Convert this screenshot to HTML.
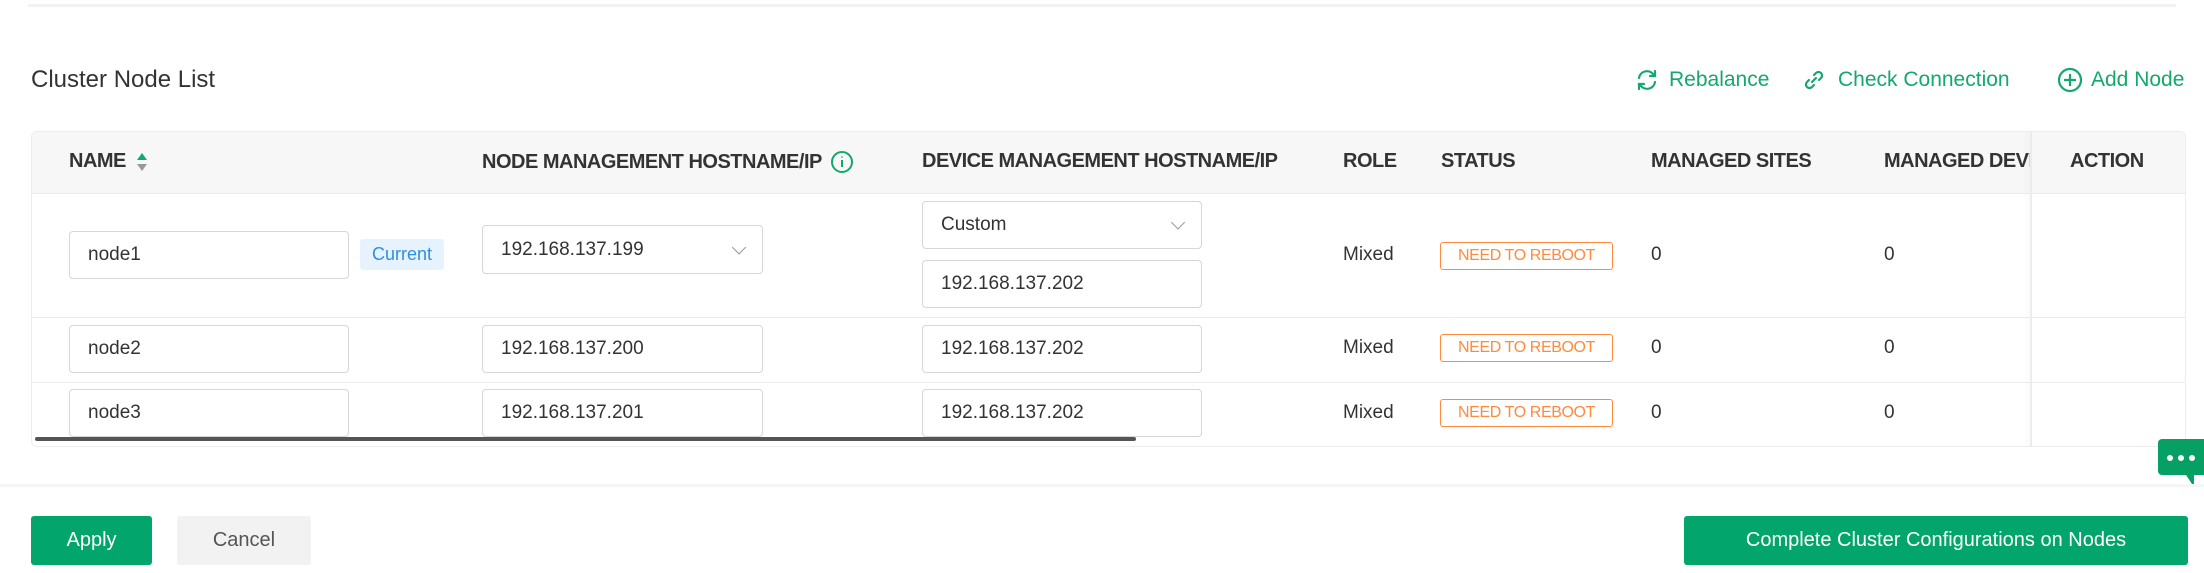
<!DOCTYPE html>
<html><head><meta charset="utf-8"><style>
*{box-sizing:border-box;margin:0;padding:0}
body{width:2204px;height:573px;background:#fff;font-family:"Liberation Sans",sans-serif;color:#333;position:relative;overflow:hidden}
.a{position:absolute;white-space:nowrap}
.hd{font-size:20px;font-weight:600;color:#333;top:150px;letter-spacing:-0.5px;display:flex;align-items:center}
.inp{position:absolute;border:1.5px solid #d6d6d6;border-radius:4px;background:#fff;font-size:19px;padding-left:18px;display:flex;align-items:center;color:#333}
.chev{position:absolute;right:18px;top:50%;width:10px;height:10px;border-right:1.5px solid #999;border-bottom:1.5px solid #999;transform:translateY(-75%) rotate(45deg)}
.badge{position:absolute;left:1440px;width:173px;height:28px;border:1.5px solid #ff8a3d;border-radius:3px;color:#ff8a3d;font-size:16px;display:flex;align-items:center;justify-content:center;letter-spacing:-0.4px}
.t{font-size:19px;color:#333}
.g{color:#13a86c;font-size:21px;top:68px}
.btn{position:absolute;top:516px;height:49px;border-radius:3px;font-size:20px;display:flex;align-items:center;justify-content:center}
</style></head><body>
<div class="a" style="left:28px;top:4px;width:2148px;height:3px;background:#f2f2f2"></div>
<div class="a" style="left:31px;top:66px;font-size:24px;color:#333">Cluster Node List</div>

<svg class="a" style="left:1635px;top:68px" width="24" height="24" viewBox="0 0 24 24" fill="none" stroke="#13a86c" stroke-width="2.2" stroke-linecap="round"><path d="M4 10a8 8 0 0 1 14-4l2 2M20 14a8 8 0 0 1-14 4l-2-2"/><path d="M20 3v5h-5M4 21v-5h5"/></svg>
<div class="a g" style="left:1669px">Rebalance</div>
<svg class="a" style="left:1802px;top:68px" width="24" height="24" viewBox="0 0 24 24" fill="none" stroke="#13a86c" stroke-width="2.2" stroke-linecap="round"><path d="M10 14l4-4"/><path d="M12 7l2-2a3.5 3.5 0 0 1 5 5l-2 2M12 17l-2 2a3.5 3.5 0 0 1-5-5l2-2"/></svg>
<div class="a g" style="left:1838px">Check Connection</div>
<svg class="a" style="left:2057px;top:67px" width="26" height="26" viewBox="0 0 26 26" fill="none" stroke="#13a86c" stroke-width="2.2"><circle cx="13" cy="13" r="11"/><path d="M13 7v12M7 13h12"/></svg>
<div class="a g" style="left:2091px">Add Node</div>

<div class="a" style="left:31px;top:131px;width:2155px;height:316px;border:1px solid #ececec;border-radius:6px;overflow:hidden">
 <div class="a" style="left:0;top:0;width:2155px;height:62px;background:#f7f7f7;border-bottom:1px solid #ececec"></div>
 <div class="a" style="left:0;top:185px;width:2155px;height:1px;background:#ececec"></div>
 <div class="a" style="left:0;top:250px;width:2155px;height:1px;background:#ececec"></div>
 <div class="a" style="left:1998px;top:0;width:2px;height:316px;background:#ececec;box-shadow:-3px 0 4px rgba(0,0,0,0.04)"></div>
</div>

<div class="a hd" style="left:69px">NAME<svg style="margin-left:10px" width="12" height="20" viewBox="0 0 12 20"><path d="M6 1l5 7H1z" fill="#13a86c"/><path d="M6 19l5-7H1z" fill="#999"/></svg></div>
<div class="a hd" style="left:482px">NODE MANAGEMENT HOSTNAME/IP<svg style="margin-left:8px" width="24" height="24" viewBox="0 0 24 24" fill="none" stroke="#13a86c" stroke-width="2"><circle cx="12" cy="12" r="10"/><path d="M12 10v7M12 6.5v1"/></svg></div>
<div class="a hd" style="left:922px">DEVICE MANAGEMENT HOSTNAME/IP</div>
<div class="a hd" style="left:1343px">ROLE</div>
<div class="a hd" style="left:1441px">STATUS</div>
<div class="a hd" style="left:1651px">MANAGED SITES</div>
<div class="a hd" style="left:1884px;width:146px;overflow:hidden">MANAGED DEVICES</div>
<div class="a hd" style="left:2070px">ACTION</div>

<!-- row1 -->
<div class="inp" style="left:69px;top:231px;width:280px;height:48px">node1</div>
<div class="a" style="left:360px;top:239px;width:84px;height:31px;background:#e6f2fd;border-radius:3px;color:#2d8ee5;font-size:18px;display:flex;align-items:center;justify-content:center">Current</div>
<div class="inp" style="left:482px;top:225px;width:281px;height:49px">192.168.137.199<span class="chev"></span></div>
<div class="inp" style="left:922px;top:201px;width:280px;height:48px">Custom<span class="chev"></span></div>
<div class="inp" style="left:922px;top:260px;width:280px;height:48px">192.168.137.202</div>
<div class="a t" style="left:1343px;top:244px">Mixed</div>
<div class="badge" style="top:242px">NEED TO REBOOT</div>
<div class="a t" style="left:1651px;top:244px">0</div>
<div class="a t" style="left:1884px;top:244px">0</div>

<!-- row2 -->
<div class="inp" style="left:69px;top:325px;width:280px;height:48px">node2</div>
<div class="inp" style="left:482px;top:325px;width:281px;height:48px">192.168.137.200</div>
<div class="inp" style="left:922px;top:325px;width:280px;height:48px">192.168.137.202</div>
<div class="a t" style="left:1343px;top:337px">Mixed</div>
<div class="badge" style="top:334px">NEED TO REBOOT</div>
<div class="a t" style="left:1651px;top:337px">0</div>
<div class="a t" style="left:1884px;top:337px">0</div>

<!-- row3 -->
<div class="inp" style="left:69px;top:389px;width:280px;height:48px">node3</div>
<div class="inp" style="left:482px;top:389px;width:281px;height:48px">192.168.137.201</div>
<div class="inp" style="left:922px;top:389px;width:280px;height:48px">192.168.137.202</div>
<div class="a t" style="left:1343px;top:402px">Mixed</div>
<div class="badge" style="top:399px">NEED TO REBOOT</div>
<div class="a t" style="left:1651px;top:402px">0</div>
<div class="a t" style="left:1884px;top:402px">0</div>
<div class="a" style="left:35px;top:437px;width:1101px;height:4px;background:#555;border-radius:2px"></div>

<!-- chat -->
<svg class="a" style="left:2158px;top:439px" width="46" height="50" viewBox="0 0 46 50"><path d="M4 0h42v36h-10v12l-8-12H4a4 4 0 0 1-4-4V4a4 4 0 0 1 4-4z" fill="#07a064"/><circle cx="12" cy="19" r="3" fill="#fff"/><circle cx="23" cy="19" r="3" fill="#fff"/><circle cx="34" cy="19" r="3" fill="#fff"/></svg>

<div class="a" style="left:0;top:484px;width:2204px;height:3px;background:#f5f5f5"></div>
<div class="btn" style="left:31px;width:121px;background:#02a66c;color:#fff">Apply</div>
<div class="btn" style="left:177px;width:134px;background:#f2f2f2;color:#555">Cancel</div>
<div class="btn" style="left:1684px;width:504px;background:#02a66c;color:#fff">Complete Cluster Configurations on Nodes</div>
</body></html>
